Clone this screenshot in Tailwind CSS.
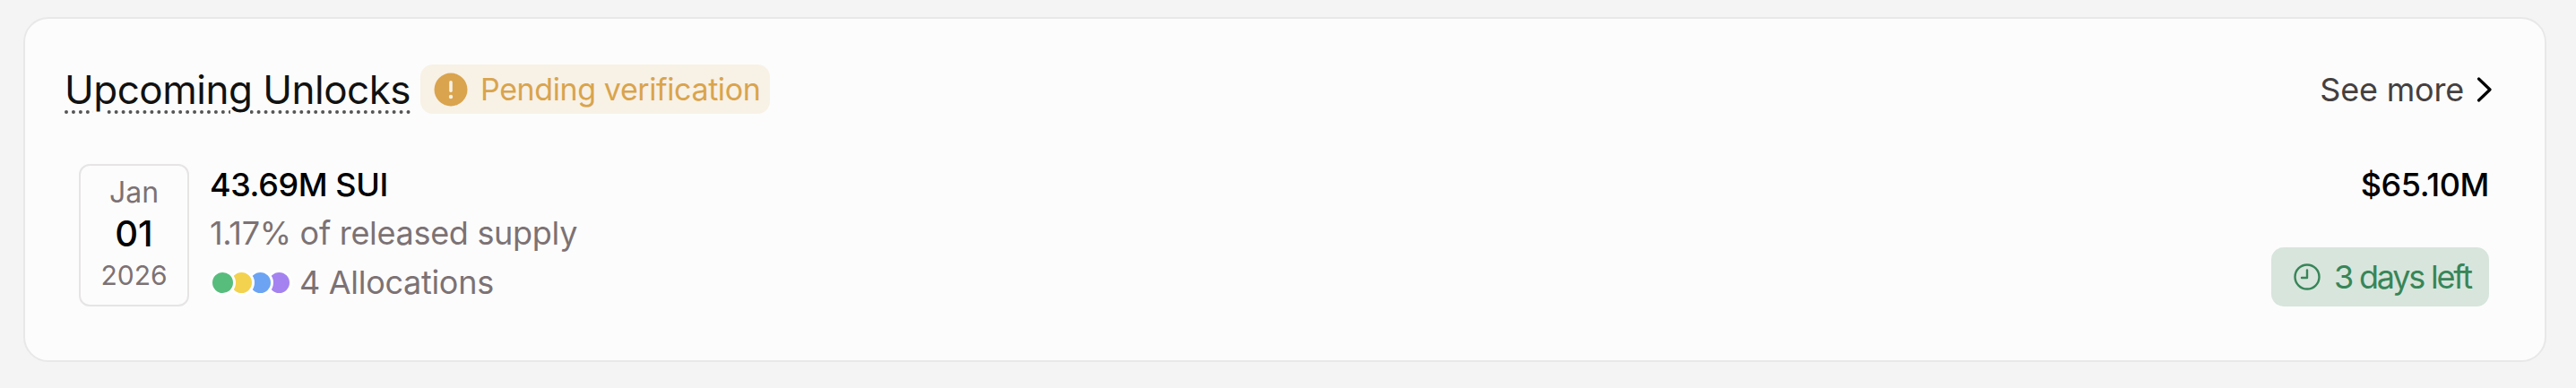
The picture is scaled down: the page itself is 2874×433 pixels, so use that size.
<!doctype html>
<html><head><meta charset="utf-8"><script src="https://cdn.jsdelivr.net/npm/@tailwindcss/browser@4"></script></head>
<body class="w-[2874px] h-[433px] bg-[#f4f4f4] font-['Inter',sans-serif] overflow-hidden">
<div class="ml-[26px] mt-[19px] w-[2815px] h-[385px] border-2 border-[#e8e8e8] rounded-[28px] bg-[#fcfcfc] pl-[44px] pr-[62px] pt-[51px]">
  <div class="flex items-center justify-between h-[55px]">
    <div class="flex items-center gap-[11px]">
      <h2 class="text-[44px] leading-[48px] font-normal tracking-[-0.5px] text-[#111] underline decoration-dotted decoration-[4px] underline-offset-[8px] decoration-[#555]">Upcoming Unlocks</h2>
      <span class="flex items-center gap-[14px] h-[55px] w-[390px] pl-[15px] rounded-[14px] bg-[#f8f1e6] text-[34px] tracking-[-0.4px] text-[#d9a44d]">
        <svg class="w-[38px] h-[38px]" viewBox="0 0 38 38"><circle cx="19" cy="19" r="18.5" fill="#d9a44d"/><rect x="17.2" y="9" width="3.6" height="13" rx="1.8" fill="#f8f1e6"/><circle cx="19" cy="27" r="2.2" fill="#f8f1e6"/></svg>
        Pending verification
      </span>
    </div>
    <a class="flex items-center gap-[14px] -mr-[4px] text-[36px] tracking-[-0.2px] text-[#453f40]">See more
      <svg class="w-[18px] h-[28px]" viewBox="0 0 18 28" fill="none"><path d="M2.5 2 L15 14 L2.5 26" stroke="#000" stroke-width="3.2" stroke-linecap="round" stroke-linejoin="round"/></svg>
    </a>
  </div>
  <div class="flex justify-between mt-[56px] pl-[16px]">
    <div class="flex gap-[23px]">
      <div class="w-[123px] h-[159px] border-2 border-[#e6e4e4] rounded-[12px] flex flex-col items-center pt-[9px]">
        <span class="text-[32px] leading-[42px] text-[#7c7274]">Jan</span>
        <span class="text-[40px] leading-[50px] font-medium text-black">01</span>
        <span class="text-[30px] leading-[42px] text-[#7c7274]">2026</span>
      </div>
      <div class="flex flex-col">
        <span class="text-[36px] leading-[46px] font-medium tracking-[-0.4px] text-black">43.69M SUI</span>
        <span class="text-[36px] leading-[56px] tracking-[-0.3px] text-[#7c7274] mt-[3px]">1.17% of released supply</span>
        <div class="flex items-center h-[54px]">
          <div class="flex">
            <span class="relative z-40 w-[29px] h-[29px] rounded-full bg-[#57bd7d] border-[3px] border-white"></span>
            <span class="relative z-30 -ml-[8px] w-[29px] h-[29px] rounded-full bg-[#f3d24f] border-[3px] border-white"></span>
            <span class="relative z-20 -ml-[8px] w-[29px] h-[29px] rounded-full bg-[#6ca4f3] border-[3px] border-white"></span>
            <span class="relative z-10 -ml-[8px] w-[29px] h-[29px] rounded-full bg-[#a483f0] border-[3px] border-white"></span>
          </div>
          <span class="ml-[8px] text-[36px] tracking-[-0.3px] text-[#7c7274]">4 Allocations</span>
        </div>
      </div>
    </div>
    <div class="flex flex-col items-end justify-between h-[159px]">
      <span class="text-[36px] leading-[46px] font-medium tracking-[-0.4px] text-black">$65.10M</span>
      <span class="flex items-center gap-[15px] h-[66px] w-[243px] pl-[25px] rounded-[14px] bg-[#d7e5dc] text-[36px] tracking-[-2.2px] text-[#388558]">
        <svg class="w-[30px] h-[30px]" viewBox="0 0 30 30" fill="none" stroke="#388558" stroke-width="2.4"><circle cx="15" cy="15" r="13.5"/><path d="M15 7.5 V16 H9" stroke-linecap="round" stroke-linejoin="round"/></svg>
        3 days left
      </span>
    </div>
  </div>
</div>
</body></html>
